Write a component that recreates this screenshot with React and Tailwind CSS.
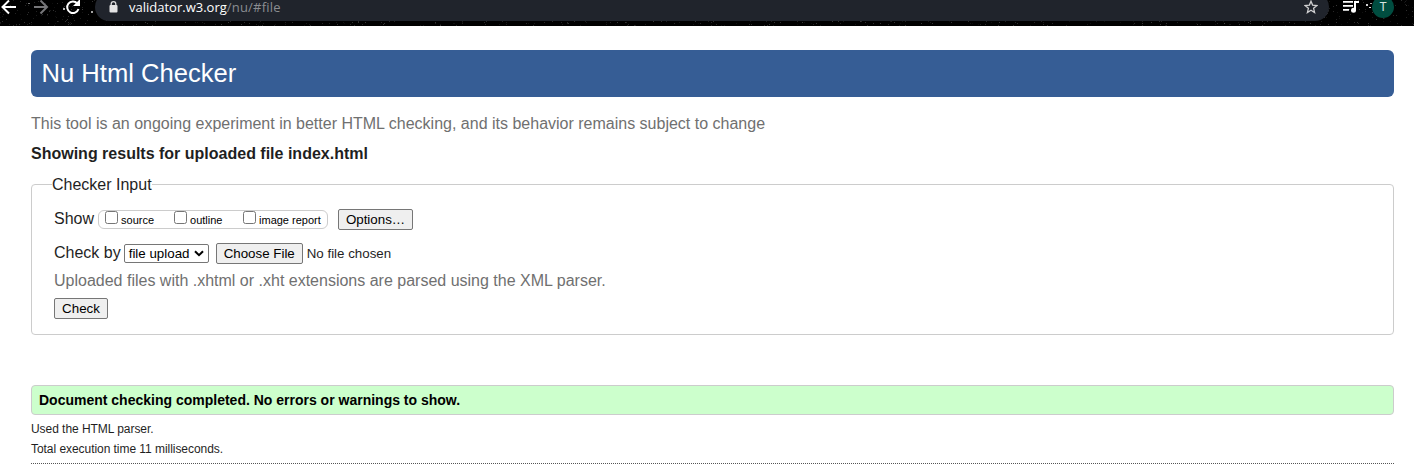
import React from "react";

// Deterministic star field for the browser theme behind the toolbar.
function makeStars(count) {
  let seed = 7;
  const next = () => {
    seed = (seed * 16807) % 2147483647;
    return seed / 2147483647;
  };
  return Array.from({ length: count }, () => ({
    x: Math.floor(next() * 1414),
    y: Math.floor(next() * 26),
    o: 0.04 + next() * 0.18,
  }));
}
const stars = makeStars(1500);

function Toolbar() {
  return (
    <header className="relative h-[26px] overflow-hidden bg-black">
      <svg className="absolute inset-0" width="1414" height="26" aria-hidden="true">
        {stars.map((s, i) => (
          <rect key={i} x={s.x} y={s.y} width="1" height="1" fill="#fff" opacity={s.o} />
        ))}
        <g fill="#e8e8e8">
          <rect x="28" y="3" width="2" height="1" opacity="0.5" />
          <rect x="63" y="8" width="2" height="2" opacity="0.8" />
          <rect x="91" y="11" width="2" height="2" opacity="0.7" />
          <rect x="1366" y="4" width="2" height="2" opacity="0.9" />
          <rect x="1370" y="3" width="2" height="1" opacity="0.7" />
          <rect x="1369" y="7" width="2" height="1" />
        </g>
      </svg>
      <div className="relative flex h-[26px] items-start">
        <svg width="95" height="26" viewBox="0 0 95 26" fill="none" className="shrink-0" aria-hidden="true">
          <path d="M16 7H3M9 0.5L2.5 7L9 13.5" stroke="#fff" strokeWidth="2" />
          <path d="M34 7H47M40.500 0.500L47 7L40.500 13.500" stroke="#77777a" strokeWidth="2" />
          <path d="M77.300 3.300A5.800 5.800 0 1 0 78.500 9" stroke="#fff" strokeWidth="2" />
          <path d="M80 -1V6H73Z" fill="#fff" />
        </svg>
        <div className="-mt-[7px] flex h-7 w-[1234px] shrink-0 items-center rounded-full bg-[#20242c] pl-[14px] pr-[11px]">
          <svg width="9" height="12" viewBox="0 0 9 12" className="-mt-px" aria-hidden="true">
            <path d="M2.200 5V3a2.300 2.300 0 0 1 4.600 0v2" fill="none" stroke="#dcdcdc" strokeWidth="1.300" />
            <rect x="0.500" y="4" width="8" height="7.500" rx="1" fill="#e4e4e4" />
          </svg>
          <span className="ml-[11px] h-[14px] font-['Open_Sans',sans-serif] text-[13px] leading-[14px] text-[#8a8d91]">
            <span className="text-white">validator.w3.org</span>
            <span className="tracking-[0.2px]">/nu/#file</span>
          </span>
          <svg width="14" height="14" viewBox="0 0 14 14" className="ml-auto" fill="none" stroke="#cfcfd0" strokeWidth="1.300" aria-hidden="true">
            <path d="M7 1.200L8.600 5.100L12.900 5.500L9.600 8.300L10.600 12.500L7 10.200L3.400 12.500L4.400 8.300L1.100 5.500L5.400 5.100Z" />
          </svg>
        </div>
        <svg width="18" height="14" viewBox="0 0 18 14" className="ml-[13px]" fill="#fff" aria-hidden="true">
          <path d="M1 1h10v1.800H1zM1 5h10v1.800H1zM1 9h6v1.800H1zM12 1h5v2h-3v7h-2z" />
          <circle cx="11.500" cy="10.300" r="2.500" />
        </svg>
        <div className="-mt-1 ml-[12px] flex size-[22px] items-center justify-center rounded-full bg-[#004d40] font-[Roboto,sans-serif] text-xs text-[#d7e4e2]">
          T
        </div>
      </div>
    </header>
  );
}

const BUTTON =
  "h-[21px] rounded-[2px] border border-[#767676] bg-[#efefef] text-center text-[13.333px] leading-[19px] text-black";

function Check({ label, className }) {
  return (
    <label className={`flex ${className}`}>
      <input type="checkbox" className="mt-px size-[13px] shrink-0 appearance-none rounded-[2.500px] border border-[#767676] bg-white" />
      <span className="ml-[3px] whitespace-nowrap text-[11px] leading-[21px] text-black">{label}</span>
    </label>
  );
}

export default function App() {
  return (
    <div className="h-[471px] w-[1414px] overflow-hidden bg-white font-['Liberation_Sans',Arial,sans-serif] text-base text-[#1f1f1f]">
      <Toolbar />
      <main className="flex flex-col pl-[31px] pr-5 pt-6">
        <h1 className="h-[47px] rounded-md bg-[#365d95] pl-[10.500px] text-[25.600px] leading-[46px] text-white">
          Nu Html Checker
        </h1>
        <p className="mt-[17px] leading-5 text-[#707070]">
          This tool is an ongoing experiment in better HTML checking, and its behavior remains subject to change
        </p>
        <h2 className="mt-[10px] font-bold leading-5">Showing results for uploaded file index.html</h2>
        <fieldset className="mt-[11px] h-[160px] rounded border border-[#ccc] pl-[22px]">
          <legend className="-ml-[2px] h-[19px] leading-5">Checker Input</legend>
          <div className="mt-[15px] flex h-[21px] items-start">
            <span className="leading-5">Show</span>
            <div className="ml-1 mt-px flex h-[19px] w-[230px] rounded-md border border-[#ccc] pl-[6px]">
              <Check label="source" className="-mt-px w-[69px]" />
              <Check label="outline" className="-mt-px w-[69px]" />
              <Check label="image report" className="-mt-px" />
            </div>
            <button className={`${BUTTON} ml-[10px] w-[75px]`}>Options…</button>
          </div>
          <div className="mt-[13px] flex h-[21px] items-start">
            <span className="leading-5">Check by</span>
            <div className="ml-[3px] mt-px flex h-[19px] w-[85px] items-center rounded-[2px] border border-[#767676] bg-white pl-1 text-[13.333px] text-black">
              <span className="leading-[17px]">file upload</span>
              <svg width="10" height="7" viewBox="0 0 10 7" className="ml-[5px]" fill="none" aria-hidden="true">
                <path d="M1 1.200L5 5.200L9 1.200" stroke="#000" strokeWidth="2" />
              </svg>
            </div>
            <button className={`${BUTTON} ml-[7px] w-[87px]`}>Choose File</button>
            <span className="ml-1 text-[13.333px] leading-[21px]">No file chosen</span>
          </div>
          <p className="mt-[7px] leading-5 text-[#707070]">
            Uploaded files with .xhtml or .xht extensions are parsed using the XML parser.
          </p>
          <button className={`${BUTTON} mt-[7px] block w-[54px]`}>Check</button>
        </fieldset>
        <p className="mt-[50px] h-[30px] rounded border border-[#ccc] bg-[#ccffcc] pl-[7px] text-[14px] font-bold leading-7 text-black">
          Document checking completed. No errors or warnings to show.
        </p>
        <p className="mt-1 text-xs leading-5 tracking-[-0.05px]">Used the HTML parser.</p>
        <p className="text-xs leading-5 tracking-[-0.05px]">Total execution time 11 milliseconds.</p>
        <hr className="mt-1 border-t border-dotted border-[#555]" />
      </main>
    </div>
  );
}
